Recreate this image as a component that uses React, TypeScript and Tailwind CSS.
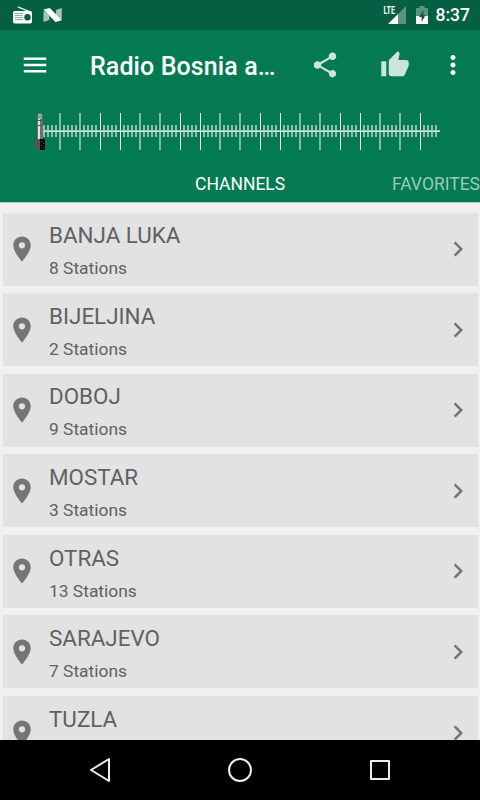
import { MdChevronRight, MdMenu, MdMoreVert, MdPlace, MdShare, MdThumbUp } from "react-icons/md";

const channels = [
  { name: "BANJA LUKA", stations: "8 Stations" },
  { name: "BIJELJINA", stations: "2 Stations" },
  { name: "DOBOJ", stations: "9 Stations" },
  { name: "MOSTAR", stations: "3 Stations" },
  { name: "OTRAS", stations: "13 Stations" },
  { name: "SARAJEVO", stations: "7 Stations" },
  { name: "TUZLA", stations: "" },
];

const minorTicks = Array.from({ length: 99 }, (_, i) => 44 + i * 4).filter((x) => x % 20 !== 0);
const majorTicks = Array.from({ length: 19 }, (_, i) => 60 + i * 20);

const RadioIcon = () => (
  <svg className="h-[18px] w-5" viewBox="0 0 20 18">
    <path d="M5.8.8 17 5.400" stroke="#e6f0ec" strokeWidth="1.300" />
    <path
      fill="#fff"
      fillRule="evenodd"
      d="M2.800 5h15.400a1.800 1.800 0 0 1 1.800 1.800v8.900a1.800 1.800 0 0 1-1.800 1.800H2.800A1.800 1.800 0 0 1 1 15.700V6.800A1.800 1.800 0 0 1 2.800 5ZM15.500 8a3.200 3.200 0 1 0 0 6.400 3.200 3.200 0 0 0 0-6.400Z"
    />
    <path d="M3 7.500h8M3 9.500h7.500M3 11.500h7.500M3 13.500h8" stroke="#056043" strokeWidth="0.800" opacity="0.600" />
  </svg>
);

const NougatIcon = () => (
  <svg className="h-4 w-5" viewBox="0 0 20 16">
    <path fill="#a4c5b8" d="M.500 3.500 6.300 8v5L.500 15ZM13 3l5.800-2v12L13 8Z" />
    <path fill="#fff" d="M.500 2.600 6.800 1 18.800 13.200 12.500 15Z" />
  </svg>
);

const SignalIcon = () => (
  <svg className="h-6 w-6" viewBox="0 0 24 24">
    <path fill="#5b937f" d="M24 6v18h-8V14Z" />
    <path fill="#fff" d="M16 14v10H6Z" />
    <text x="1.500" y="14" fill="#fff" fontSize="11" fontWeight="700" textLength="11.500" lengthAdjust="spacingAndGlyphs">
      LTE
    </text>
  </svg>
);

const BatteryIcon = () => (
  <svg className="h-[18px] w-3" viewBox="0 0 12 18">
    <path fill="#5b937f" d="M3.500 0h5v2H12v8H0V2h3.500Z" />
    <path fill="#fff" d="M0 10h12v8H0Z" />
    <path fill="#056043" d="M7.300 4 3 11h2.600v5L9.500 9H7.300Z" />
  </svg>
);

const Tuner = () => (
  <svg className="block h-12 w-[480px]" viewBox="0 108 480 48" shapeRendering="crispEdges">
    {minorTicks.map((x) => (
      <rect key={x} x={x - 1} y="125" width="2" height="12" fill="#8dc1ad" />
    ))}
    {majorTicks.map((x, i) => {
      const sharp = i % 4 > 1;
      return (
        <rect
          key={x}
          x={sharp ? x : x - 1}
          y="113"
          width={sharp ? 1 : 2}
          height="37"
          fill={sharp ? "#f0f5f2" : "#86b8a4"}
        />
      );
    })}
    <rect x="43" y="130" width="397" height="2" fill="#a3ccbc" />
    <rect x="43" y="131" width="397" height="1" fill="#c9e1d7" />
    {/* jack plug */}
    <rect x="37" y="119" width="6" height="20" fill="#707070" />
    <rect x="38" y="114" width="4" height="5" fill="#a8a8a8" />
    <rect x="39" y="113" width="2" height="1" fill="#777" />
    <rect x="38" y="119" width="2" height="20" fill="#e2e2e2" />
    <rect x="37" y="116" width="6" height="1" fill="#888" />
    <rect x="37" y="120" width="6" height="1" fill="#555" />
    <rect x="37" y="125" width="6" height="1" fill="#555" />
    <rect x="35" y="139" width="5" height="11" fill="#555" />
    <rect x="40" y="139" width="5" height="11" fill="#080808" />
    <path fill="#555" d="M41 141h1v1h-1zM43 143h1v1h-1zM41 145h1v1h-1zM43 147h1v1h-1z" />
  </svg>
);

const StatusBar = () => (
  <div className="flex h-[30px] items-center bg-[#056043] pr-[10px] pl-3 text-white">
    <RadioIcon />
    <div className="ml-[11px]">
      <NougatIcon />
    </div>
    <div className="ml-auto flex h-[30px] items-start">
      <SignalIcon />
      <div className="ml-[10px] pt-[6px]">
        <BatteryIcon />
      </div>
      <span className="ml-2 pt-[6px] text-[17.5px] leading-[18px] font-medium">8:37</span>
    </div>
  </div>
);

const Header = () => (
  <header className="h-[172px] bg-[#047a52] text-white">
    <div className="flex h-[70px] items-center">
      <MdMenu className="mb-px ml-5 h-[30px] w-[30px]" />
      <h1 className="ml-10 w-[190px] pt-1 text-[25px] font-medium tracking-[0.1px] whitespace-nowrap">
        Radio Bosnia a…
      </h1>
      <MdShare className="ml-[30px] h-[30px] w-[30px] text-[#cde4dc]" />
      <MdThumbUp className="ml-10 h-[30px] w-[30px] text-[#cde4dc]" />
      <MdMoreVert className="ml-[27.5px] h-[30px] w-[30px]" />
    </div>
    <div className="pt-2">
      <Tuner />
    </div>
    <div className="flex h-[46px] items-center overflow-hidden pt-[10px] text-[17.5px] whitespace-nowrap">
      <span className="ml-[195px] w-[197px]">CHANNELS</span>
      <span className="text-[#9bcab9]">FAVORITES</span>
    </div>
  </header>
);

const App = () => {
  return (
    <div className="flex h-[800px] w-[480px] flex-col overflow-hidden bg-[#f0f0f0] font-[Roboto,sans-serif]">
      <StatusBar />
      <Header />
      <main className="flex min-h-0 flex-1 flex-col gap-[7.6px] overflow-hidden border-t border-[#a9c9bb] px-[2.5px] pt-[9.500px]">
        {channels.map((channel) => (
          <div key={channel.name} className="flex h-[73px] shrink-0 items-center bg-[#e2e2e2] text-[#616161]">
            <MdPlace className="ml-[4.500px] h-[30px] w-[30px] text-[#757575]" />
            <div className="ml-3 pt-[6.400px]">
              <div className="h-[33px] text-[22.400px] leading-[33px]">{channel.name}</div>
              <div className="h-[33px] text-[17.400px] leading-[33px]">{channel.stations}</div>
            </div>
            <MdChevronRight className="mr-[5px] ml-auto h-[30px] w-[30px] text-[#757575]" />
          </div>
        ))}
      </main>
      <nav className="flex h-[60px] shrink-0 items-center bg-black">
        <svg className="h-[60px] w-[480px]" viewBox="0 0 480 60" fill="none" stroke="#eee" strokeWidth="2" strokeLinejoin="round">
          <path d="M109 19v22L91 30Z" />
          <circle cx="240" cy="30" r="11" />
          <rect x="371" y="21" width="18" height="18" />
        </svg>
      </nav>
    </div>
  );
};

export default App;
